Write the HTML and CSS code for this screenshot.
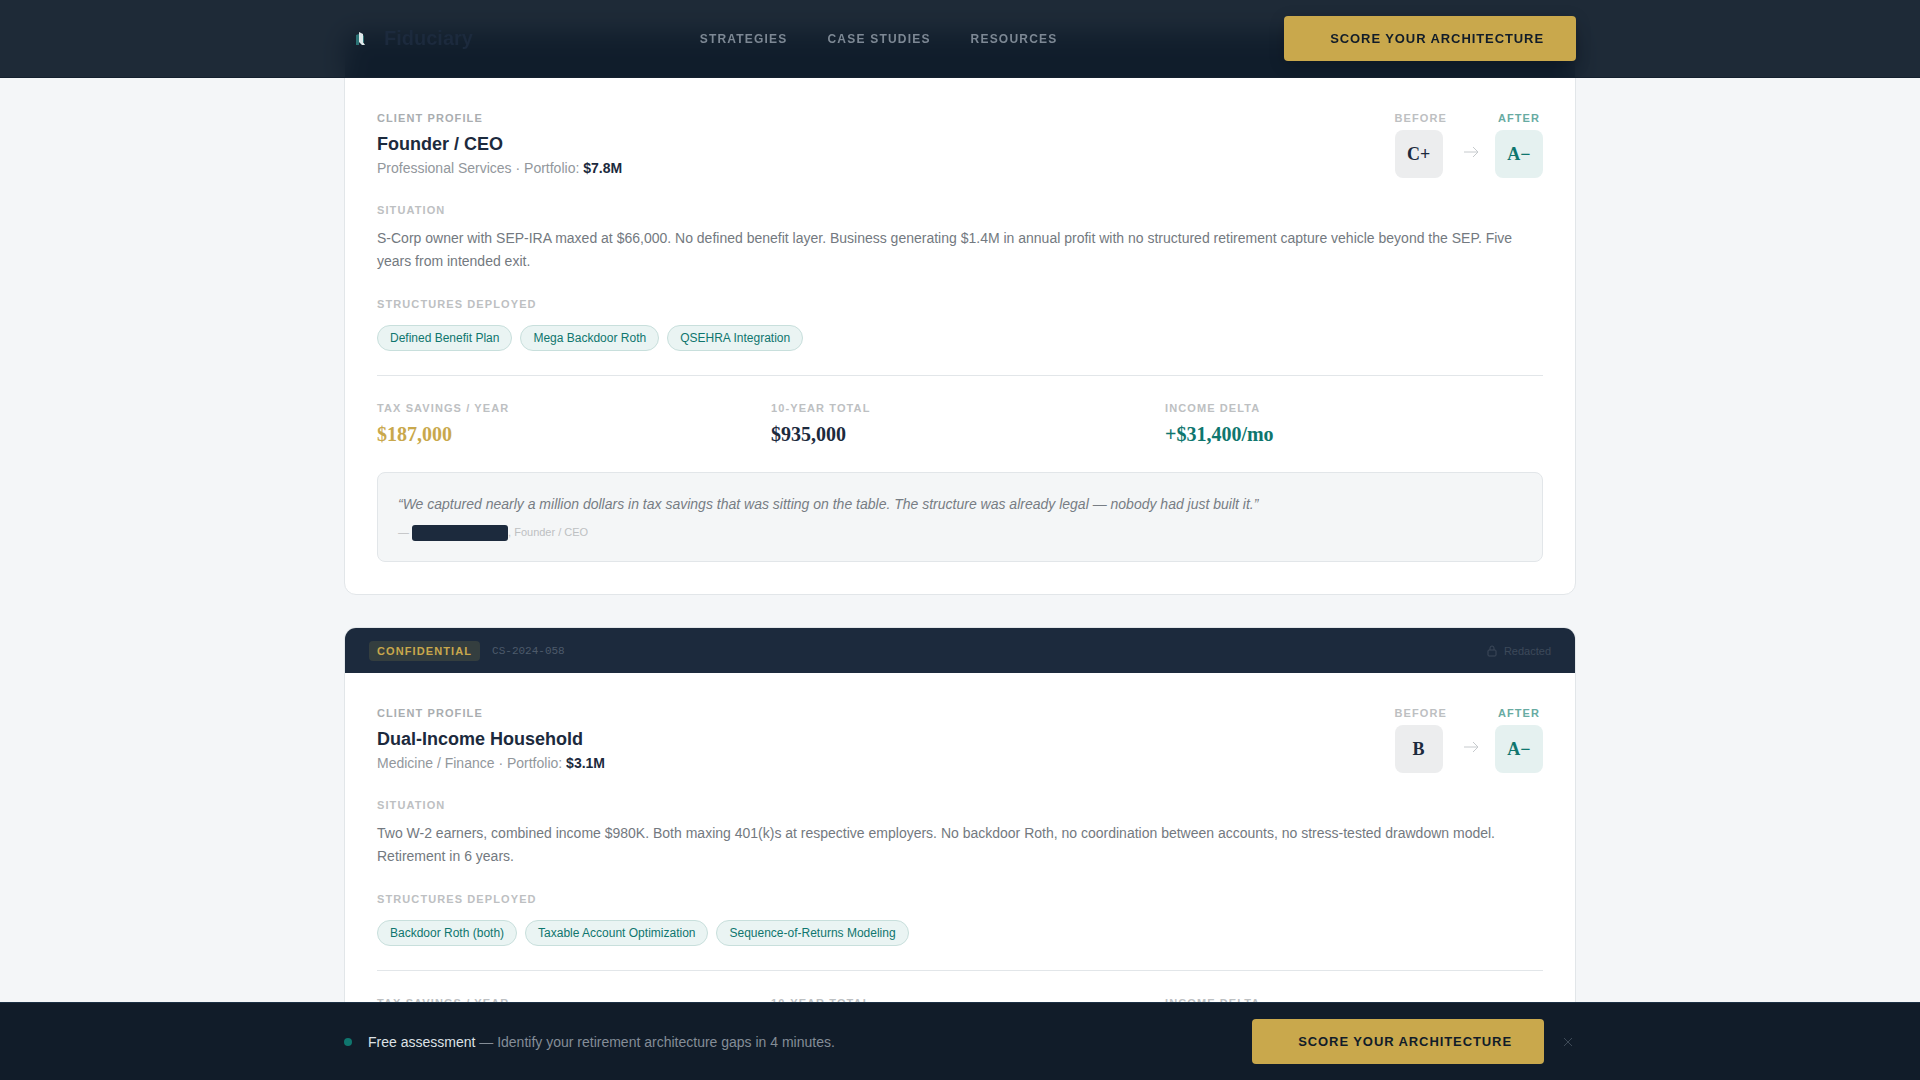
FILE: index.html
```html
<!DOCTYPE html>
<html lang="en">
<head>
    <meta charset="UTF-8">
    <meta name="viewport" content="width=device-width, initial-scale=1">
    <title>Fiduciary - Case Studies</title>
    <link rel="stylesheet" href="styles.css">
</head>
<body>
    <header class="site-header">
        <div class="container header-row">
            <a href="#" class="logo">
                <svg width="32" height="32" viewBox="0 0 32 32">
                    <path d="M12 12l3-1v11h-3z" fill="#2c7476"/>
                    <path d="M15 9l4 2v8l2 3h-3l-3-3z" fill="#dfe8ea"/>
                    <path d="M19 12l1 1v7l-1-1z" fill="#2c7476"/>
                </svg>
                <span>Fiduciary</span>
            </a>
            <nav class="nav">
                <a href="#">Strategies</a>
                <a href="#">Case Studies</a>
                <a href="#">Resources</a>
            </nav>
            <button class="btn">Score Your Architecture</button>
        </div>
    </header>

    <main class="container cases">
        <article class="card">
            <div class="card-bar"></div>
            <div class="card-body">
                <div class="profile">
                    <div>
                        <p class="label label-dark">Client Profile</p>
                        <h2>Founder / CEO</h2>
                        <p class="meta">Professional Services · Portfolio: <strong>$7.8M</strong></p>
                    </div>
                    <div class="grades">
                        <div class="grade">
                            <p class="label">Before</p>
                            <div class="grade-box">C+</div>
                        </div>
                        <svg class="arrow" width="16" height="16" viewBox="0 0 16 16"><path d="M1 8h14M10 3l5 5-5 5"/></svg>
                        <div class="grade after">
                            <p class="label">After</p>
                            <div class="grade-box">A−</div>
                        </div>
                    </div>
                </div>
                <section class="situation">
                    <h3 class="label">Situation</h3>
                    <p>S-Corp owner with SEP-IRA maxed at $66,000. No defined benefit layer. Business generating $1.4M in annual profit with no structured retirement capture vehicle beyond the SEP. Five years from intended exit.</p>
                </section>
                <section class="structures">
                    <h3 class="label">Structures Deployed</h3>
                    <ul class="chips">
                        <li>Defined Benefit Plan</li>
                        <li>Mega Backdoor Roth</li>
                        <li>QSEHRA Integration</li>
                    </ul>
                </section>
                <dl class="stats">
                    <div>
                        <dt class="label">Tax Savings / Year</dt>
                        <dd class="gold">$187,000</dd>
                    </div>
                    <div>
                        <dt class="label">10-Year Total</dt>
                        <dd>$935,000</dd>
                    </div>
                    <div>
                        <dt class="label">Income Delta</dt>
                        <dd class="teal">+$31,400/mo</dd>
                    </div>
                </dl>
                <blockquote class="quote">
                    <p>“We captured nearly a million dollars in tax savings that was sitting on the table. The structure was already legal — nobody had just built it.”</p>
                    <footer>— <span class="redacted"></span>, Founder / CEO</footer>
                </blockquote>
            </div>
        </article>

        <article class="card">
            <div class="card-bar">
                <span class="badge">Confidential</span>
                <span class="case-id">CS-2024-058</span>
                <span class="lock">
                    <svg width="12" height="12" viewBox="0 0 12 12"><rect x="2" y="5" width="8" height="6" rx="1"/><path d="M4 5V3a2 2 0 0 1 4 0v2"/></svg>
                    Redacted
                </span>
            </div>
            <div class="card-body">
                <div class="profile">
                    <div>
                        <p class="label label-dark">Client Profile</p>
                        <h2>Dual-Income Household</h2>
                        <p class="meta">Medicine / Finance · Portfolio: <strong>$3.1M</strong></p>
                    </div>
                    <div class="grades">
                        <div class="grade">
                            <p class="label">Before</p>
                            <div class="grade-box">B</div>
                        </div>
                        <svg class="arrow" width="16" height="16" viewBox="0 0 16 16"><path d="M1 8h14M10 3l5 5-5 5"/></svg>
                        <div class="grade after">
                            <p class="label">After</p>
                            <div class="grade-box">A−</div>
                        </div>
                    </div>
                </div>
                <section class="situation">
                    <h3 class="label">Situation</h3>
                    <p>Two W-2 earners, combined income $980K. Both maxing 401(k)s at respective employers. No backdoor Roth, no coordination between accounts, no stress-tested drawdown model. Retirement in 6 years.</p>
                </section>
                <section class="structures">
                    <h3 class="label">Structures Deployed</h3>
                    <ul class="chips">
                        <li>Backdoor Roth (both)</li>
                        <li>Taxable Account Optimization</li>
                        <li>Sequence-of-Returns Modeling</li>
                    </ul>
                </section>
                <dl class="stats">
                    <div><dt class="label">Tax Savings / Year</dt></div>
                    <div><dt class="label">10-Year Total</dt></div>
                    <div><dt class="label">Income Delta</dt></div>
                </dl>
            </div>
        </article>
    </main>

    <div class="sticky-bar">
        <div class="container sticky-row">
            <span class="dot"></span>
            <p><strong>Free assessment</strong> — Identify your retirement architecture gaps in 4 minutes.</p>
            <button class="btn">Score Your Architecture</button>
            <button class="close" aria-label="Close">
                <svg width="16" height="16" viewBox="0 0 16 16"><path d="M4 4l8 8M12 4l-8 8"/></svg>
            </button>
        </div>
    </div>
</body>
</html>
```
FILE: styles.css
```css
* {
    margin: 0;
    padding: 0;
    box-sizing: border-box;
}
body {
    background: #f4f6f8;
    color: #1c2a3d;
    font-family: "Liberation Sans", Arial, sans-serif;
    font-size: 14px;
    overflow: hidden;
}
.container {
    max-width: 1280px;
    margin: 0 auto;
    padding: 0 24px;
}

/* header */
.site-header {
    position: fixed;
    top: 0;
    left: 0;
    right: 0;
    z-index: 10;
    background: rgba(16, 29, 43, 0.94);
    backdrop-filter: blur(12px);
    border-bottom: 1px solid #14202e;
}
.header-row {
    display: flex;
    align-items: center;
    justify-content: space-between;
    padding-top: 16px;
    padding-bottom: 16px;
}
.logo {
    display: flex;
    align-items: center;
    gap: 8px;
    color: #1c2a3d;
    font-size: 20px;
    font-weight: bold;
    text-decoration: none;
}
.nav {
    display: flex;
    gap: 40px;
}
.nav a {
    color: #7d8894;
    font-size: 12px;
    font-weight: bold;
    line-height: 16px;
    letter-spacing: 0.1em;
    text-transform: uppercase;
    text-decoration: none;
}
.btn {
    height: 45px;
    padding: 0 32px 0 46px;
    border: none;
    border-radius: 4px;
    background: #c9a84c;
    color: #111c29;
    font-family: inherit;
    font-size: 13px;
    font-weight: bold;
    letter-spacing: 0.07em;
    text-transform: uppercase;
    white-space: nowrap;
    cursor: pointer;
}
.site-header .btn {
    box-shadow: 0 4px 16px rgba(0, 0, 0, 0.2);
}

/* case cards */
.cases {
    display: flex;
    flex-direction: column;
    gap: 32px;
    padding-top: 32px;
}
.card {
    background: #fff;
    border: 1px solid #e2e6e9;
    border-radius: 12px;
    overflow: hidden;
}
.card-bar {
    display: flex;
    align-items: center;
    gap: 12px;
    height: 45px;
    padding: 0 24px;
    background: #1c2a3d;
}
.badge {
    padding: 0 8px;
    border-radius: 4px;
    background: #343e3f;
    color: #c9a84c;
    font-size: 11px;
    font-weight: bold;
    line-height: 20px;
    letter-spacing: 0.1em;
    text-transform: uppercase;
}
.case-id {
    color: #4d5a6b;
    font-family: "Liberation Mono", monospace;
    font-size: 11px;
}
.lock {
    display: flex;
    align-items: center;
    gap: 6px;
    margin-left: auto;
    color: #3c495a;
    font-size: 11px;
}
.lock svg {
    fill: none;
    stroke: #3c495a;
}
.card-body {
    padding: 32px;
}
.label {
    color: #bdc0c2;
    font-size: 11px;
    font-weight: bold;
    line-height: 16px;
    letter-spacing: 0.1em;
    text-transform: uppercase;
}
.label-dark {
    color: #a9adb0;
}
.profile {
    display: flex;
    justify-content: space-between;
    margin-bottom: 24px;
}
.profile h2 {
    margin-top: 4px;
    font-size: 18px;
    line-height: 28px;
}
.meta {
    color: #92979c;
    line-height: 20px;
}
.meta strong {
    color: #1c2a3d;
}
.grades {
    display: flex;
    align-items: center;
    gap: 16px;
}
.grade .label {
    margin-bottom: 4px;
    text-align: center;
}
.grade-box {
    display: flex;
    align-items: center;
    justify-content: center;
    width: 48px;
    height: 48px;
    border-radius: 8px;
    background: #ecedee;
    font-family: "Liberation Serif", serif;
    font-size: 18px;
    font-weight: bold;
}
.after .label {
    color: #68aba2;
}
.after .grade-box {
    background: #e5f1f0;
    color: #0f766e;
}
.arrow {
    margin-top: 16px;
    fill: none;
    stroke: #c6cacd;
}
.situation {
    margin-bottom: 23px;
}
.situation p {
    margin-top: 9px;
    color: #737980;
    line-height: 23px;
}
.chips {
    display: flex;
    gap: 8px;
    margin-top: 13px;
    list-style: none;
}
.chips li {
    padding: 0 12px;
    border: 1px solid #c8dfdc;
    border-radius: 13px;
    background: #eaf4f3;
    color: #0f766e;
    font-size: 12px;
    line-height: 24px;
}
.stats {
    display: grid;
    grid-template-columns: repeat(3, 1fr);
    gap: 16px;
    margin-top: 24px;
    padding-top: 24px;
    border-top: 1px solid #e2e6e9;
}
.stats dd {
    margin-top: 4px;
    font-family: "Liberation Serif", serif;
    font-size: 20px;
    font-weight: bold;
    line-height: 28px;
}
.stats .gold {
    color: #c9a84c;
}
.stats .teal {
    color: #0f766e;
}
.quote {
    margin-top: 24px;
    padding: 20px;
    border: 1px solid #e2e6e9;
    border-radius: 8px;
    background: #f4f6f7;
}
.quote p {
    color: #777d84;
    font-style: italic;
    line-height: 23px;
}
.quote footer {
    margin-top: 8px;
    color: #bdc0c2;
    font-size: 11px;
    line-height: 16px;
}
.redacted {
    display: inline-block;
    width: 96px;
    height: 16px;
    border-radius: 3px;
    background: #1c2a3d;
    vertical-align: middle;
}

/* bottom call to action */
.sticky-bar {
    position: fixed;
    left: 0;
    right: 0;
    bottom: 0;
    z-index: 10;
    background: #111c29;
    border-top: 1px solid #1c3044;
}
.sticky-row {
    display: flex;
    align-items: center;
    gap: 16px;
    padding-top: 16px;
    padding-bottom: 16px;
}
.sticky-row p {
    flex: 1;
    color: #848d97;
}
.sticky-row strong {
    color: #dde1e5;
    font-weight: normal;
}
.dot {
    width: 8px;
    height: 8px;
    border-radius: 50%;
    background: #0f766e;
}
.close {
    display: flex;
    border: none;
    background: none;
    cursor: pointer;
}
.close svg {
    fill: none;
    stroke: #3d4956;
}
```
